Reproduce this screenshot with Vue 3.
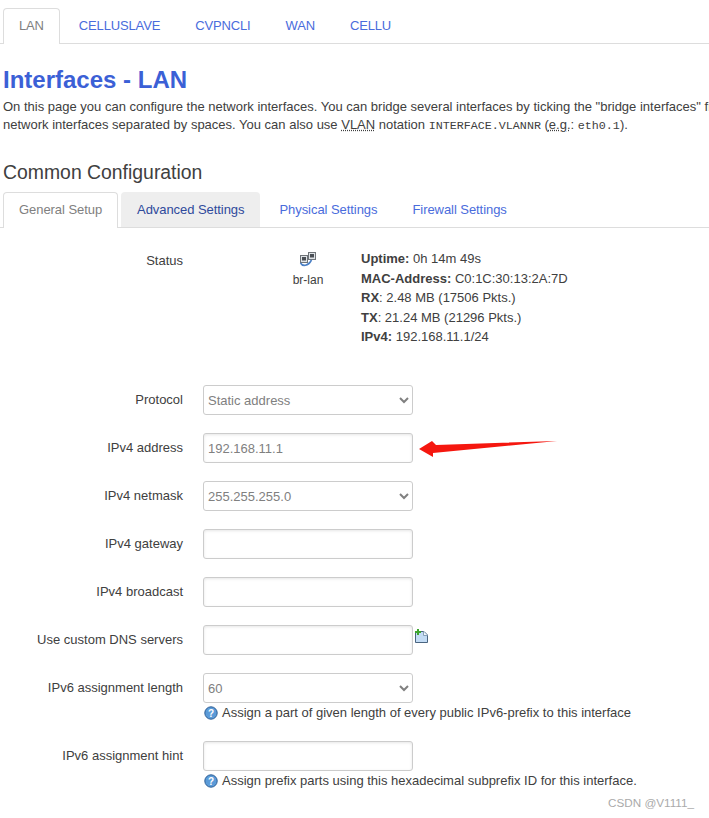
<template>
  <div class="page">
    <ul class="tabs">
      <li v-for="(t, i) in netTabs" :key="t" :class="{ active: i === 0 }">{{ t }}</li>
    </ul>

    <h2 class="title">Interfaces - LAN</h2>
    <p class="desc">
      On this page you can configure the network interfaces. You can bridge several interfaces by ticking the "bridge interfaces" field and enter the names of several<br>
      network interfaces separated by spaces. You can also use <abbr>VLAN</abbr> notation <code>INTERFACE.VLANNR</code> (<abbr>e.g.</abbr>: <code>eth0.1</code>).
    </p>

    <h3 class="section">Common Configuration</h3>
    <ul class="tabs sub">
      <li v-for="(t, i) in setupTabs" :key="t" :class="{ active: i === 0, hover: i === 1 }">{{ t }}</li>
    </ul>

    <div class="status">
      <div class="label">Status</div>
      <div class="ifbox">
        <svg width="18" height="15" viewBox="0 0 18 15">
          <rect x="1.5" y="3.5" width="7" height="7" fill="#dfe3e7" stroke="#6f7478" />
          <rect x="3" y="5" width="4" height="3.5" fill="#4a4f55" />
          <rect x="9.5" y="0.5" width="7" height="7" fill="#dfe3e7" stroke="#6f7478" />
          <rect x="11" y="2" width="4" height="3.5" fill="#4a4f55" />
          <path d="M1.5 11C3.5 14.5 9 14.5 12.5 8" fill="none" stroke="#4a7fc4" stroke-width="1.6" />
        </svg>
        <span>br-lan</span>
      </div>
      <div class="info">
        <div><b>Uptime:</b> 0h 14m 49s</div>
        <div><b>MAC-Address:</b> C0:1C:30:13:2A:7D</div>
        <div><b>RX</b>: 2.48 MB (17506 Pkts.)</div>
        <div><b>TX</b>: 21.24 MB (21296 Pkts.)</div>
        <div><b>IPv4:</b> 192.168.11.1/24</div>
      </div>
    </div>

    <div class="form">
      <div v-for="f in fields" :key="f.label" class="row">
        <label class="label">{{ f.label }}</label>
        <div class="control">
          <div class="line">
            <select v-if="f.type === 'select'" class="field">
              <option>{{ f.value }}</option>
            </select>
            <input v-else class="field" type="text" :value="f.value">
            <svg v-if="f.add" class="add" width="15" height="15" viewBox="0 0 15 15">
              <path d="M1.5 2.5H10L13.5 6V13.5H1.5Z" fill="#c3dcf5" stroke="#4a6580" />
              <path d="M9.5 2.5V6.5H13.5" fill="#eef6fd" stroke="#86a0b8" />
              <path d="M4 0V6M1 3H7" stroke="#3fa52f" stroke-width="2" />
            </svg>
          </div>
          <div v-if="f.help" class="help">
            <svg width="14" height="14" viewBox="0 0 14 14">
              <circle cx="7" cy="7" r="6.2" fill="#5b9bd8" stroke="#2f5f96" />
              <text x="7" y="10.5" text-anchor="middle" class="q">?</text>
            </svg>
            <span>{{ f.help }}</span>
          </div>
        </div>
      </div>
    </div>

    <svg class="arrow" width="140" height="18" viewBox="0 0 140 18">
      <path d="M139 1L18 5L14 1L1 9L15 17L15 13Z" fill="#f5170f" />
    </svg>
    <div class="mark">CSDN @V1111_</div>
  </div>
</template>

<script setup>
const netTabs = ['LAN', 'CELLUSLAVE', 'CVPNCLI', 'WAN', 'CELLU']
const setupTabs = ['General Setup', 'Advanced Settings', 'Physical Settings', 'Firewall Settings']

const fields = [
  { label: 'Protocol', type: 'select', value: 'Static address' },
  { label: 'IPv4 address', value: '192.168.11.1' },
  { label: 'IPv4 netmask', type: 'select', value: '255.255.255.0' },
  { label: 'IPv4 gateway', value: '' },
  { label: 'IPv4 broadcast', value: '' },
  { label: 'Use custom DNS servers', value: '', add: true },
  {
    label: 'IPv6 assignment length',
    type: 'select',
    value: '60',
    help: 'Assign a part of given length of every public IPv6-prefix to this interface',
  },
  {
    label: 'IPv6 assignment hint',
    value: '',
    help: 'Assign prefix parts using this hexadecimal subprefix ID for this interface.',
  },
]
</script>

<style>
html,
body {
  margin: 0;
  background: #fff;
}
</style>

<style scoped>
.page {
  position: relative;
  width: 709px;
  height: 818px;
  overflow: hidden;
  font-family: "Liberation Sans", Arial, sans-serif;
  font-size: 13px;
  line-height: 18px;
  color: #404040;
}

.tabs {
  display: flex;
  list-style: none;
  margin: 0;
  padding: 8px 0 0 3px;
  border-bottom: 1px solid #ddd;
  letter-spacing: -0.15px;
}

.tabs li {
  height: 34px;
  line-height: 34px;
  padding: 0 15px;
  margin-right: 3px;
  color: #4a6cdc;
  border: 1px solid transparent;
  border-bottom: 0;
  border-radius: 4px 4px 0 0;
  box-sizing: content-box;
  margin-bottom: -1px;
}

.tabs li.active {
  color: #808080;
  background: #fff;
  border-color: #ddd;
  height: 35px;
}

.tabs li.hover {
  background: #eee;
  color: #2f4a9c;
}

.tabs.sub {
  padding-top: 8px;
  letter-spacing: -0.06px;
}

.title {
  margin: 22px 0 0 3px;
  font-size: 24px;
  line-height: 28px;
  font-weight: bold;
  color: #3b60d6;
}

.desc {
  margin: 4px 0 0 3px;
  white-space: nowrap;
}

abbr {
  text-decoration: underline dotted;
}

code {
  font-family: "Liberation Mono", monospace;
  font-size: 11.7px;
}

.section {
  margin: 25px 0 0 3px;
  font-size: 19.4px;
  line-height: 24px;
  font-weight: normal;
}

.status {
  display: flex;
  margin-top: 22px;
  height: 135px;
}

.label {
  display: block;
  width: 183px;
  margin-right: 20px;
  flex: none;
  text-align: right;
  line-height: 30px;
}

.status .label {
  line-height: 20px;
  margin-top: 1px;
}

.ifbox {
  width: 106px;
  margin-left: 52px;
  padding-top: 2px;
  display: flex;
  flex-direction: column;
  align-items: center;
  gap: 4px;
  font-size: 12px;
}

.info {
  line-height: 19.6px;
  margin-top: -1px;
}

.row {
  display: flex;
  margin-bottom: 18px;
}

.line {
  display: flex;
  align-items: flex-start;
}

.field {
  width: 210px;
  height: 30px;
  box-sizing: border-box;
  padding: 0 4px;
  margin: 0;
  border: 1px solid #ccc;
  border-radius: 3px;
  background-color: #fff;
  font-family: inherit;
  font-size: 13px;
  color: #808080;
}

select.field {
  padding-left: 0;
}

input.field {
  box-shadow: inset 0 1px 3px rgba(0, 0, 0, 0.1);
}

.add {
  margin: 4px 0 0 1px;
}

.help {
  display: flex;
  align-items: center;
  gap: 4px;
  height: 20px;
  padding-bottom: 1px;
  box-sizing: border-box;
  margin-left: 1px;
  font-size: 13px;
  white-space: nowrap;
}

.q {
  font-size: 10px;
  font-weight: bold;
  fill: #fff;
}

.arrow {
  position: absolute;
  left: 418px;
  top: 440px;
}

.mark {
  position: absolute;
  right: 15px;
  top: 794px;
  font-size: 11.7px;
  color: #aaa;
}
</style>
